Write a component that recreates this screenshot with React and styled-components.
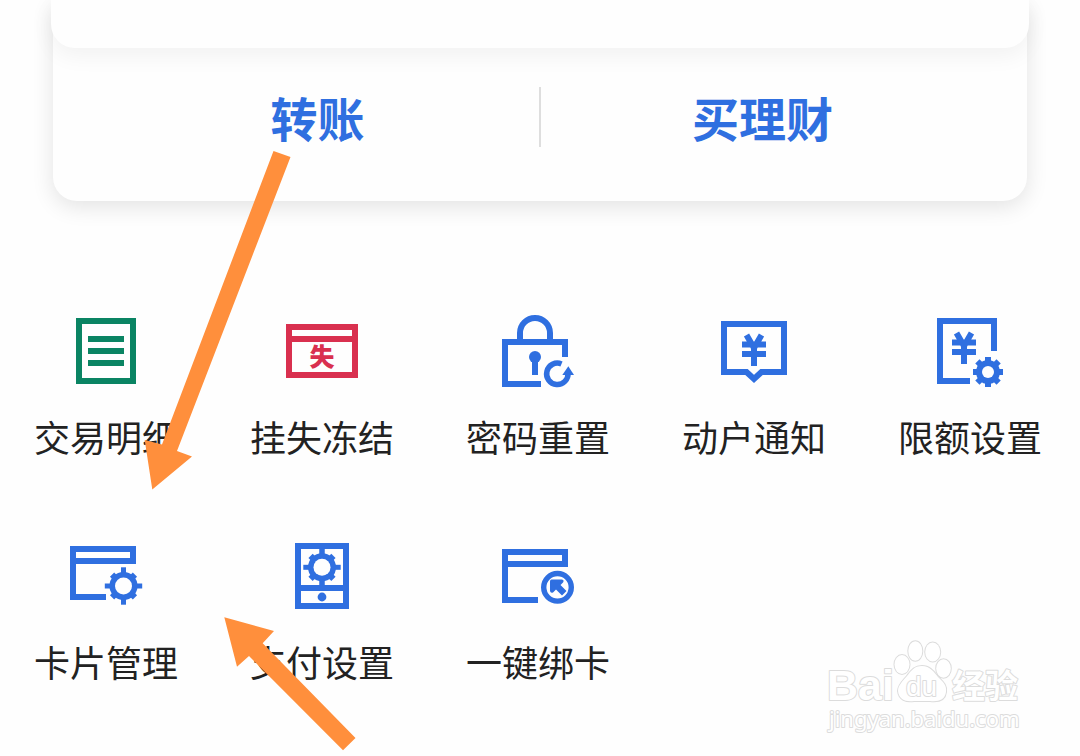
import React from 'react';
import styled, { createGlobalStyle } from 'styled-components';

const BLUE = '#2f6fe0';
const GREEN = '#0a8463';
const RED = '#d9304f';
const ORANGE = '#ff8f3c';

const GlobalStyle = createGlobalStyle`
  * {
    box-sizing: border-box;
  }

  body {
    margin: 0;
    background-color: #fefefe;
    color: #222222;
    font-family: "Noto Sans CJK SC", "Noto Sans", sans-serif;
  }
`

const Page = styled.main`
  position: relative;
  min-height: 100vh;
  overflow: hidden;
`

const AccountCard = styled.section`
  margin: 0 51px;
`

const CardTop = styled.div`
  position: relative;
  height: 48px;
  border-radius: 0 0 24px 24px;
  background-color: #fefefe;
  box-shadow: 0 8px 22px rgba(0, 0, 0, 0.05);
`

const CardActions = styled.div`
  display: flex;
  align-items: center;
  margin: -48px 2px 0;
  padding: 87px 43px 54px;
  border-radius: 0 0 24px 24px;
  background-color: #fefefe;
  box-shadow: 0 6px 22px rgba(0, 0, 0, 0.11);
`

const ActionButton = styled.button`
  flex: 1;
  height: 60px;
  padding: 0;
  border: none;
  background: none;
  color: ${BLUE};
  font-family: inherit;
  font-size: 47px;
  font-weight: 700;
  line-height: 60px;
  cursor: pointer;
`

const Divider = styled.span`
  width: 2px;
  height: 60px;
  background-color: #dedede;
`

const Menu = styled.nav`
  display: grid;
  grid-template-columns: repeat(5, 1fr);
  row-gap: 80px;
  margin-top: 114px;
`

const MenuItem = styled.button`
  display: flex;
  flex-direction: column;
  align-items: center;
  gap: 25px;
  padding: 0 4px 0 0;
  border: none;
  background: none;
  color: inherit;
  font-family: inherit;
  cursor: pointer;
`

const MenuLabel = styled.span`
  font-size: 36px;
  line-height: 48px;
  white-space: nowrap;
`

const Icon = styled.svg`
  display: block;
  width: 72px;
  height: 72px;
  overflow: visible;
  fill: none;
  stroke: ${props => props.$color};
  stroke-width: 6px;

  .solid {
    fill: ${props => props.$color};
    stroke: none;
  }

  .hole {
    fill: #fefefe;
    stroke: none;
  }
`

const Arrow = styled.svg`
  position: absolute;
  top: ${props => props.$top}px;
  left: ${props => props.$left}px;
  fill: ${ORANGE};
  pointer-events: none;
`

const Watermark = styled.svg`
  position: absolute;
  right: 50px;
  bottom: 16px;
  overflow: visible;
  fill: #ffffff;
  stroke: #dcdcdc;
  stroke-width: 2px;
  paint-order: stroke;
  stroke-linejoin: round;
  pointer-events: none;
`

const Teeth = ({ cx, cy, angles, length, width }) => angles.map(angle => (
  <rect
    key={angle}
    className="solid"
    x={cx - width / 2}
    y={cy - length}
    width={width}
    height={length}
    transform={`rotate(${angle} ${cx} ${cy})`}
  />
))

const ThinGear = ({ cx, cy }) => (
  <g>
    <Teeth cx={cx} cy={cy} angles={[0, 90, 180, 270]} length={18.7} width={5} />
    <Teeth cx={cx} cy={cy} angles={[45, 135, 225, 315]} length={16.2} width={6} />
    <circle className="solid" cx={cx} cy={cy} r="14" />
    <circle className="hole" cx={cx} cy={cy} r="8.5" />
  </g>
)

const Yen = ({ x, y }) => (
  <g transform={`translate(${x} ${y})`}>
    <path d="M4.5 1 12 14 19.5 1M0 10.5H24M0 20H24M12 12V32" strokeWidth="6" />
  </g>
)

const DetailIcon = () => (
  <Icon viewBox="0 0 72 72" $color={GREEN}>
    <rect x="9" y="6" width="54" height="60" />
    <path d="M18 24H54M18 36H54M18 48H54" />
  </Icon>
)

const LossIcon = () => (
  <Icon viewBox="0 0 72 72" $color={RED}>
    <rect x="3" y="12" width="66" height="48" />
    <path d="M3 24H69" />
    <text className="solid" x="36" y="51" textAnchor="middle" fontSize="25" fontWeight="900">失</text>
  </Icon>
)

const LockIcon = () => (
  <Icon viewBox="0 0 72 72" $color={BLUE}>
    <path d="M18 25V18a15 15 0 0 1 30 0V25" />
    <path d="M63 42V27H3V69H39" />
    <circle className="solid" cx="33" cy="42" r="6" />
    <path d="M33 42V60" />
    <path d="M59.5 49A10.7 10.7 0 1 0 66 58" strokeWidth="5.5" />
    <path className="solid" d="M66.3 51.2 72 60H60.3z" />
  </Icon>
)

const NoticeIcon = () => (
  <Icon viewBox="0 0 72 72" $color={BLUE}>
    <path d="M6 9H66V57H43.5L36 64 28.5 57H6z" />
    <Yen x={24} y={19} />
  </Icon>
)

const LimitIcon = () => (
  <Icon viewBox="0 0 72 72" $color={BLUE}>
    <path d="M60 36V6H6V66H36" />
    <Yen x={18} y={17} />
    <Teeth cx={54} cy={57} angles={[0, 45, 90, 135, 180, 225, 270, 315]} length={15} width={6} />
    <circle className="solid" cx="54" cy="57" r="12" />
    <circle className="hole" cx="54" cy="57" r="6" />
  </Icon>
)

const CardIcon = () => (
  <Icon viewBox="0 0 72 72" $color={BLUE}>
    <path d="M3 21H63V9H3V57H36" />
    <ThinGear cx={53.5} cy={46} />
  </Icon>
)

const PayIcon = () => (
  <Icon viewBox="0 0 72 72" $color={BLUE}>
    <rect x="12" y="6" width="48" height="60" />
    <path d="M12 48H60" />
    <path d="M36 6V46" strokeWidth="5" />
    <ThinGear cx={36} cy={27.3} />
    <circle className="solid" cx="36" cy="57" r="4.4" />
  </Icon>
)

const BindIcon = () => (
  <Icon viewBox="0 0 72 72" $color={BLUE}>
    <path d="M3 24H63V12H3V60H36" />
    <circle cx="55.5" cy="47.3" r="13.8" strokeWidth="5.4" />
    <path
      className="solid"
      d="M49.5 39.5H60Q62.5 40 61 42.5L58.5 45 64.5 51 60 55.5 54 49.5 51 52.5Q48.5 53.5 48 51V41.5Q48 39.5 49.5 39.5z"
    />
  </Icon>
)

const menuItems = [
  { label: '交易明细', icon: DetailIcon },
  { label: '挂失冻结', icon: LossIcon },
  { label: '密码重置', icon: LockIcon },
  { label: '动户通知', icon: NoticeIcon },
  { label: '限额设置', icon: LimitIcon },
  { label: '卡片管理', icon: CardIcon },
  { label: '支付设置', icon: PayIcon },
  { label: '一键绑卡', icon: BindIcon },
]

export default class App extends React.Component {
  render() {
    return (
      <Page>
        <GlobalStyle />
        <AccountCard>
          <CardTop />
          <CardActions>
            <ActionButton type="button">转账</ActionButton>
            <Divider />
            <ActionButton type="button">买理财</ActionButton>
          </CardActions>
        </AccountCard>
        <Menu>
          {menuItems.map(({ label, icon: ItemIcon }) => (
            <MenuItem key={label} type="button">
              <ItemIcon />
              <MenuLabel>{label}</MenuLabel>
            </MenuItem>
          ))}
        </Menu>
        <Arrow $left={140} $top={150} width="155" height="345" viewBox="140 150 155 345">
          <path d="M273.5 151 290.5 157 177 451 192 456.5 152.3 489.5 144.7 440 162 444.5z" />
        </Arrow>
        <Arrow $left={220} $top={612} width="140" height="144" viewBox="220 612 140 144">
          <path d="M224.3 617.3 274 631 262.7 643.3 355.5 738 343 750.3 249 656 237 666.7z" />
        </Arrow>
        <Watermark width="202" height="100" viewBox="828 640 202 100">
          <text x="827" y="700" fontFamily="Liberation Sans" fontWeight="700" fontSize="43">Bai</text>
          <ellipse cx="902" cy="664.5" rx="7.5" ry="9.5" />
          <ellipse cx="915.3" cy="651" rx="7" ry="9.8" />
          <ellipse cx="932.7" cy="652" rx="7.5" ry="9.5" />
          <ellipse cx="943.5" cy="668.5" rx="7.3" ry="9.2" />
          <path d="M922 666C930 666 934 672 938 677 943 682 947 685 946 692 945 700 938 702 930 701H914C906 702 899 700 898 691 898 685 903 681 907 676 911 671 914 666 922 666z" />
          <text x="906" y="696" fontFamily="Liberation Sans" fontSize="28">du</text>
          <text x="952" y="698" fontWeight="700" fontSize="33">经验</text>
          <text x="829" y="727" fontFamily="Noto Sans" fontSize="22">jingyan.baidu.com</text>
        </Watermark>
      </Page>
    )
  }
}
